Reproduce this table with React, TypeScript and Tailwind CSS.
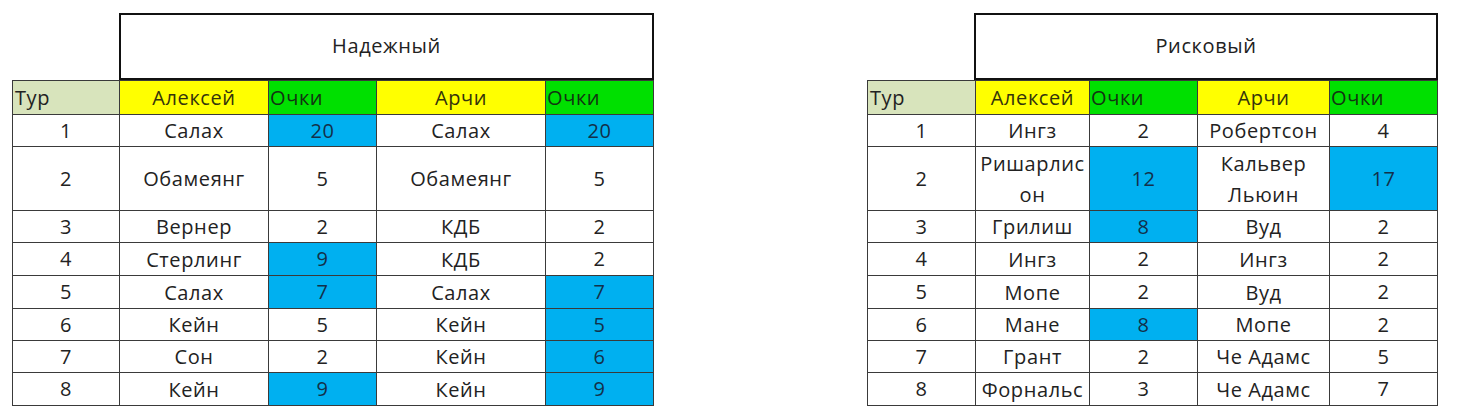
type Cell = { text: string; hi?: boolean };
type Row = { tur: number; a: string; ap: Cell; b: string; bp: Cell };

const left: Row[] = [
  { tur: 1, a: "Салах", ap: { text: "20", hi: true }, b: "Салах", bp: { text: "20", hi: true } },
  { tur: 2, a: "Обамеянг", ap: { text: "5" }, b: "Обамеянг", bp: { text: "5" } },
  { tur: 3, a: "Вернер", ap: { text: "2" }, b: "КДБ", bp: { text: "2" } },
  { tur: 4, a: "Стерлинг", ap: { text: "9", hi: true }, b: "КДБ", bp: { text: "2" } },
  { tur: 5, a: "Салах", ap: { text: "7", hi: true }, b: "Салах", bp: { text: "7", hi: true } },
  { tur: 6, a: "Кейн", ap: { text: "5" }, b: "Кейн", bp: { text: "5", hi: true } },
  { tur: 7, a: "Сон", ap: { text: "2" }, b: "Кейн", bp: { text: "6", hi: true } },
  { tur: 8, a: "Кейн", ap: { text: "9", hi: true }, b: "Кейн", bp: { text: "9", hi: true } },
];

const right: Row[] = [
  { tur: 1, a: "Ингз", ap: { text: "2" }, b: "Робертсон", bp: { text: "4" } },
  { tur: 2, a: "Ришарлис\nон", ap: { text: "12", hi: true }, b: "Кальвер\nЛьюин", bp: { text: "17", hi: true } },
  { tur: 3, a: "Грилиш", ap: { text: "8", hi: true }, b: "Вуд", bp: { text: "2" } },
  { tur: 4, a: "Ингз", ap: { text: "2" }, b: "Ингз", bp: { text: "2" } },
  { tur: 5, a: "Мопе", ap: { text: "2" }, b: "Вуд", bp: { text: "2" } },
  { tur: 6, a: "Мане", ap: { text: "8", hi: true }, b: "Мопе", bp: { text: "2" } },
  { tur: 7, a: "Грант", ap: { text: "2" }, b: "Че Адамс", bp: { text: "5" } },
  { tur: 8, a: "Форнальс", ap: { text: "3" }, b: "Че Адамс", bp: { text: "7" } },
];

const cell = "flex items-center justify-center text-center bg-white leading-[22px]";

function Points({ c }: { c: Cell }) {
  return (
    <div className={`${cell} ${c.hi ? "!bg-[#00b0f0] text-[#13304a]" : ""}`}>{c.text}</div>
  );
}

function ScoreTable({ title, rows, cols }: { title: string; rows: Row[]; cols: string }) {
  return (
    <div className="flex flex-col">
      <div className="flex">
        <div className="w-[107px] shrink-0" />
        <div className="flex-1 h-[67px] border-2 border-[#111] flex items-center justify-center pb-[2px]">
          {title}
        </div>
      </div>
      <div
        className={`grid ${cols} grid-rows-[33px_31px_63px_31px_32px_32px_31px_31px_32px] gap-px p-px bg-[#3a3a3a]`}
      >
        <div className={`${cell} !bg-[#d8e4bc] !justify-start pl-[2px]`}>Тур</div>
        <div className={`${cell} !bg-[#ffff00] text-[#34340c]`}>Алексей</div>
        <div className={`${cell} !bg-[#00e000] !justify-start pl-[1px] text-[#123412]`}>Очки</div>
        <div className={`${cell} !bg-[#ffff00] text-[#34340c]`}>Арчи</div>
        <div className={`${cell} !bg-[#00e000] !justify-start pl-[1px] text-[#123412]`}>Очки</div>
        {rows.map((r) => (
          <div key={r.tur} className="contents">
            <div className={cell}>{r.tur}</div>
            <div className={`${cell} whitespace-pre-line !leading-[31px]`}>{r.a}</div>
            <Points c={r.ap} />
            <div className={`${cell} whitespace-pre-line !leading-[31px]`}>{r.b}</div>
            <Points c={r.bp} />
          </div>
        ))}
      </div>
    </div>
  );
}

export default function App() {
  return (
    <div className="w-[1460px] h-[417px] bg-white pt-[13px] pl-[12px] flex items-start gap-[213px] text-[20px] font-medium tracking-[0.6px] text-[#222] font-['Open_Sans',sans-serif]">
      <ScoreTable
        title="Надежный"
        rows={left}
        cols="grid-cols-[106px_148px_107px_168px_107px]"
      />
      <ScoreTable
        title="Рисковый"
        rows={right}
        cols="grid-cols-[107px_113px_107px_131px_107px]"
      />
    </div>
  );
}
